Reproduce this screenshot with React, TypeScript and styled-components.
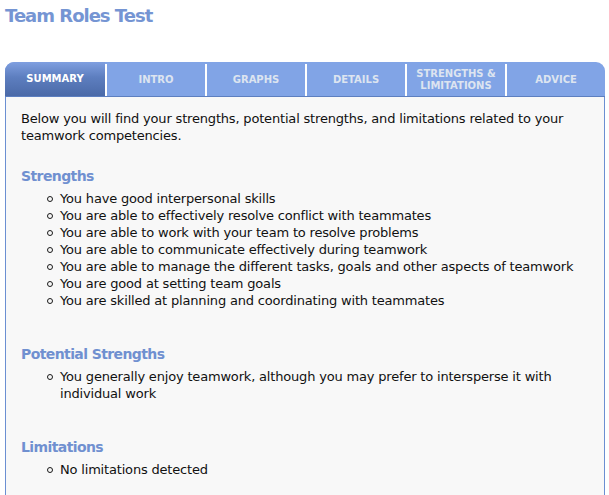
import React from "react";
import styled, { createGlobalStyle } from "styled-components";

const Global = createGlobalStyle`
  html, body { margin: 0; padding: 0; background: #ffffff; }
  body { font-family: "DejaVu Sans", Verdana, sans-serif; }
`;

const Page = styled.div`
  padding: 0 4px 0 5px;
`;

const Title = styled.h1`
  margin: 0;
  padding: 5px 0 0 0;
  height: 62px;
  box-sizing: border-box;
  font-size: 18px;
  font-weight: bold;
  color: #7595d3;
  letter-spacing: -1px;
`;

const TabBar = styled.div`
  display: grid;
  grid-template-columns: repeat(6, 1fr);
  height: 34px;
  background: #81a4e6;
  border-radius: 9px 9px 0 0;
  border-bottom: 1px solid #5d7fc0;
  overflow: hidden;
  width: 600px;
`;

const Tab = styled.div<{ $active?: boolean; $first?: boolean }>`
  display: flex;
  align-items: center;
  justify-content: center;
  text-align: center;
  font-size: 10px;
  line-height: 12px;
  font-weight: bold;
  color: ${(p) => (p.$active ? "#ffffff" : "#dde4f0")};
  background: ${(p) =>
    p.$active ? "linear-gradient(to bottom, #7f9fe0 0%, #5d7ebf 45%, #4b6aa8 100%)" : "transparent"};
  border-left: ${(p) => (p.$first ? "none" : "2px solid #ffffff")};
  margin-top: ${(p) => (p.$first ? "0" : "2px")};
`;

const Panel = styled.div`
  width: 600px;
  box-sizing: border-box;
  border-left: 1px solid #6b8fd2;
  border-right: 1px solid #6b8fd2;
  background: #f8f8f8;
  padding: 13px 15px 20px 15px;
  min-height: 400px;
  font-size: 13px;
  line-height: 17px;
  letter-spacing: -0.18px;
  color: #111111;
`;

const Intro = styled.p`
  margin: 0 0 22px 0;
`;

const Heading = styled.h2`
  margin: 0 0 4px 0;
  font-size: 14px;
  line-height: 20px;
  font-weight: bold;
  letter-spacing: -0.6px;
  color: #7090d0;
`;

const List = styled.ul<{ $gap: number }>`
  margin: 0 0 ${(p) => p.$gap}px 0;
  padding: 0 0 0 39px;
  list-style: none;
`;

const Item = styled.li`
  &::before {
    content: "";
    display: inline-block;
    box-sizing: border-box;
    width: 6px;
    height: 6px;
    border: 1.3px solid #1a1a1a;
    border-radius: 50%;
    margin-left: -13px;
    margin-right: 7px;
    vertical-align: 1px;
  }
`;

const tabs = ["SUMMARY", "INTRO", "GRAPHS", "DETAILS", "STRENGTHS & LIMITATIONS", "ADVICE"];

const strengths = [
  "You have good interpersonal skills",
  "You are able to effectively resolve conflict with teammates",
  "You are able to work with your team to resolve problems",
  "You are able to communicate effectively during teamwork",
  "You are able to manage the different tasks, goals and other aspects of teamwork",
  "You are good at setting team goals",
  "You are skilled at planning and coordinating with teammates",
];

export default function App() {
  return (
    <Page>
      <Global />
      <Title>Team Roles Test</Title>
      <TabBar>
        {tabs.map((t, i) => (
          <Tab key={t} $active={i === 0} $first={i === 0}>
            {t === "STRENGTHS & LIMITATIONS" ? (
              <span>
                STRENGTHS &amp;
                <br />
                LIMITATIONS
              </span>
            ) : (
              t
            )}
          </Tab>
        ))}
      </TabBar>
      <Panel>
        <Intro>
          Below you will find your strengths, potential strengths, and limitations related to your
          teamwork competencies.
        </Intro>
        <Heading>Strengths</Heading>
        <List $gap={35}>
          {strengths.map((s) => (
            <Item key={s}>{s}</Item>
          ))}
        </List>
        <Heading>Potential Strengths</Heading>
        <List $gap={35}>
          <Item>You generally enjoy teamwork, although you may prefer to intersperse it with individual work</Item>
        </List>
        <Heading>Limitations</Heading>
        <List $gap={0}>
          <Item>No limitations detected</Item>
        </List>
      </Panel>
    </Page>
  );
}
